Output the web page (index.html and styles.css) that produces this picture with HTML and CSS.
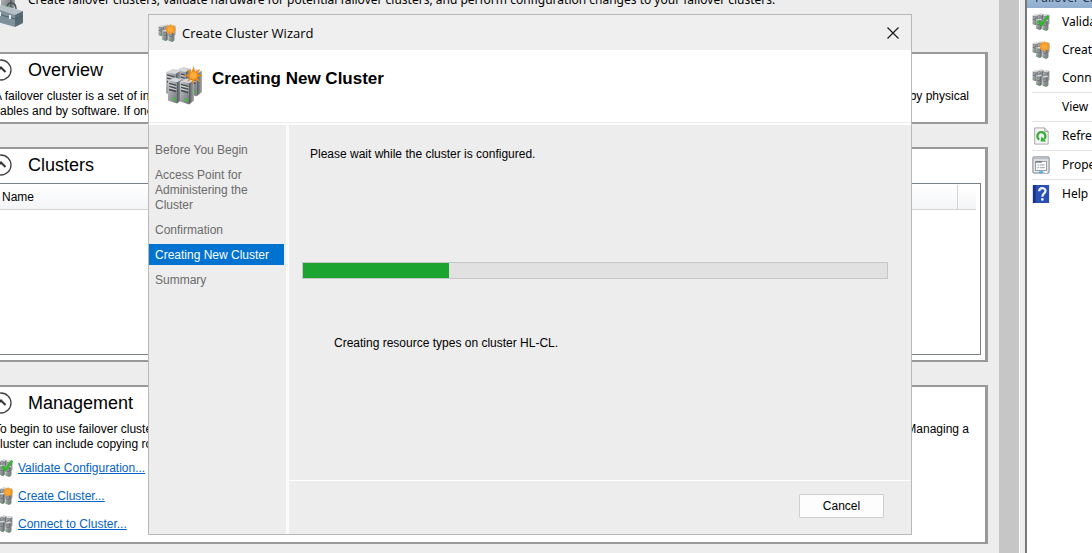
FILE: index.html
```html
<!DOCTYPE html>
<html lang="en">
<head>
    <meta charset="UTF-8">
    <title>Failover Cluster Manager</title>
    <link rel="stylesheet" href="styles.css">
</head>
<body>
<!-- shared icon shapes -->
<svg class="defs" aria-hidden="true">
    <defs>
        <linearGradient id="front" x1="0" y1="0" x2="1" y2="1">
            <stop offset="0" stop-color="#c9cccf"/>
            <stop offset="0.5" stop-color="#999da1"/>
            <stop offset="1" stop-color="#70757a"/>
        </linearGradient>
        <linearGradient id="side" x1="0" y1="0" x2="1" y2="0">
            <stop offset="0" stop-color="#53575b"/>
            <stop offset="1" stop-color="#a6aaad"/>
        </linearGradient>
        <symbol id="server" viewBox="0 0 16 26">
            <path d="M1 3L8 0L15 2L10 5Z" fill="#d5d8da"/>
            <path d="M1 3L10 5V26L1 23Z" fill="url(#front)"/>
            <path d="M10 5L15 2V22L10 26Z" fill="url(#side)"/>
            <path d="M2 6L9 8M2 9L9 11M2 12L9 14" stroke="#43484c" stroke-width="1.4"/>
            <path d="M2 7L9 9M2 10L9 12" stroke="#f7f8f8" stroke-width="0.6"/>
            <circle cx="7.5" cy="21.5" r="1.5" fill="#35c625"/>
        </symbol>
        <symbol id="servers" viewBox="0 0 40 40">
            <use href="#server" x="22" y="3" width="17" height="29"/>
            <use href="#server" x="11" y="1" width="17" height="29"/>
            <use href="#server" x="1" y="3" width="17" height="29"/>
            <use href="#server" x="3" y="12" width="16" height="27"/>
            <use href="#server" x="15" y="13" width="16" height="27"/>
        </symbol>
        <symbol id="servers-sm" viewBox="0 0 20 20">
            <use href="#server" x="0" y="1" width="8" height="13"/>
            <use href="#server" x="6" y="0" width="8" height="13"/>
            <use href="#server" x="12" y="1" width="8" height="13"/>
            <use href="#server" x="4" y="6" width="8" height="13"/>
            <use href="#server" x="11" y="7" width="8" height="13"/>
        </symbol>
        <symbol id="star" viewBox="0 0 20 20">
            <path d="M10 0L11.7 6L17 3L14 8.300L20 10L14 11.700L17 17L11.700 14L10 20L8.300 14L3 17L6 11.700L0 10L6 8.300L3 3L8.300 6Z" fill="#f08a14"/>
            <circle cx="10" cy="10" r="3.500" fill="#ffae3c"/>
        </symbol>
        <symbol id="burst" viewBox="0 0 12 12">
            <path d="M6 0L7.500 2L10 1.500L10.500 4L12 6L10.500 8L10 10.500L7.500 10L6 12L4.500 10L2 10.500L1.500 8L0 6L1.500 4L2 1.500L4.500 2Z" fill="#f59a27"/>
            <circle cx="6" cy="6" r="3" fill="#ffa938"/>
        </symbol>
        <symbol id="check" viewBox="0 0 14 14">
            <path d="M1 7L5 12L13 1" fill="none" stroke="#2fb62b" stroke-width="3"/>
        </symbol>
        <symbol id="collapse" viewBox="0 0 22 22">
            <circle cx="11" cy="11" r="10" fill="#fff" stroke="#404040" stroke-width="1.300"/>
            <path d="M6.500 13L11 8.500L15.500 13" fill="none" stroke="#333" stroke-width="2"/>
        </symbol>
    </defs>
</svg>

<div class="app">
    <main class="workspace">
        <header class="intro">
            <svg class="intro-icon" viewBox="0 0 44 44">
                <use href="#server" x="4" y="0" width="16" height="28"/>
                <use href="#server" x="20" y="0" width="16" height="28"/>
                <path d="M27 24C27 17 36 17 36 25" fill="none" stroke="#4a4f52" stroke-width="1.500"/>
                <path d="M14 24L22 21L43 27L34 32Z" fill="#b4c0c6"/>
                <path d="M14 24L35 31V43L14 37Z" fill="#7f929c"/>
                <path d="M35 31L43 27V39L35 43Z" fill="#566a75"/>
                <path d="M14 29L35 35L43 32" fill="none" stroke="#4d5e68"/>
                <path d="M20 28V32M30 31V35" stroke="#e8edf0" stroke-width="2"/>
            </svg>
            <p>Create failover clusters, validate hardware for potential failover clusters, and perform configuration changes to your failover clusters.</p>
        </header>

        <section class="card">
            <h2><svg class="toggle"><use href="#collapse"/></svg>Overview</h2>
            <p class="line"><span>A failover cluster is a set of independent computers that work together</span><span>connected by physical</span></p>
            <p class="line"><span>cables and by software. If one of the nodes fails, another node begins to</span></p>
        </section>

        <section class="card">
            <h2><svg class="toggle"><use href="#collapse"/></svg>Clusters</h2>
            <div class="list">
                <table>
                    <thead>
                        <tr><th scope="col">Name</th><td class="spare"></td></tr>
                    </thead>
                </table>
            </div>
        </section>

        <section class="card">
            <h2><svg class="toggle"><use href="#collapse"/></svg>Management</h2>
            <p class="line"><span>To begin to use failover clustering, first validate your hardware</span><span>Managing a</span></p>
            <p class="line"><span>cluster can include copying roles from a cluster</span></p>
            <ul class="links">
                <li><svg class="icon" viewBox="0 0 20 20"><use href="#servers-sm"/><use href="#check" x="7" y="1" width="13" height="13"/></svg><a href="#">Validate Configuration...</a></li>
                <li><svg class="icon" viewBox="0 0 20 20"><use href="#servers-sm"/><use href="#burst" x="9" y="0" width="11" height="11"/></svg><a href="#">Create Cluster...</a></li>
                <li><svg class="icon" viewBox="0 0 20 20"><use href="#servers-sm"/></svg><a href="#">Connect to Cluster...</a></li>
            </ul>
        </section>
    </main>

    <div class="scroll"></div>
    <div class="splitter"></div>

    <aside class="actions">
        <h2>Failover Cluster Manager</h2>
        <ul>
            <li><a href="#"><svg class="icon" viewBox="0 0 20 20"><use href="#servers-sm"/><use href="#check" x="6" y="1" width="13" height="15"/></svg>Validate Configuration...</a></li>
            <li><a href="#"><svg class="icon" viewBox="0 0 20 20"><use href="#servers-sm"/><use href="#burst" x="8" y="0" width="12" height="12"/></svg>Create Cluster...</a></li>
            <li><a href="#"><svg class="icon" viewBox="0 0 20 20"><use href="#servers-sm"/></svg>Connect to Cluster...</a></li>
            <li class="group"><a href="#"><span class="icon"></span>View</a></li>
            <li class="group"><a href="#"><svg class="icon" viewBox="0 0 20 20">
                <path d="M3 1H14L18 5V19H3Z" fill="#f6f6f6" stroke="#a2a2a2"/>
                <path d="M14 1V5H18" fill="#ddd" stroke="#a2a2a2"/>
                <path d="M8 14A4.500 4.500 0 1 1 13.500 13.500" fill="none" stroke="#36ad35" stroke-width="2.500"/>
                <path d="M10.500 10.500L16 16H9.500Z" fill="#36ad35"/>
            </svg>Refresh</a></li>
            <li class="group"><a href="#"><svg class="icon" viewBox="0 0 20 20">
                <rect x="1" y="1" width="18" height="18" rx="1" fill="#e3e6e9" stroke="#74797f"/>
                <path d="M2 3H18" stroke="#a9afb5"/>
                <rect x="4" y="6" width="12" height="10" fill="#fff" stroke="#8a9097"/>
                <path d="M4 6.500H11" stroke="#7b8188" stroke-width="2"/>
                <path d="M6 10H8M9 10H14M6 13H8M9 13H14" stroke="#8a9097"/>
                <path d="M8 18H12" stroke="#27b5ea" stroke-width="2"/><path d="M14 18H17" stroke="#fff" stroke-width="2"/>
            </svg>Properties</a></li>
            <li class="group"><a href="#"><svg class="icon" viewBox="0 0 20 20">
                <rect x="1" y="0" width="18" height="20" fill="#2b50b4"/>
                <path d="M1 0H4V20H1Z" fill="#173583"/>
                <path d="M8 7C8 2.500 15 2.500 15 6.500C15 9.500 11.500 9 11.500 13" fill="none" stroke="#eef2ff" stroke-width="2.500"/>
                <circle cx="11.500" cy="16" r="1.500" fill="#eef2ff"/>
            </svg>Help</a></li>
        </ul>
    </aside>
</div>

<div class="wizard" role="dialog" aria-labelledby="wizard-title">
    <div class="titlebar">
        <svg class="title-icon" viewBox="0 0 20 20"><use href="#servers-sm"/><use href="#burst" x="8" y="0" width="12" height="12"/></svg>
        <span id="wizard-title">Create Cluster Wizard</span>
        <button class="close" type="button" aria-label="Close"><svg viewBox="0 0 12 12"><path d="M0.500 0.500L11.500 11.500M11.500 0.500L0.500 11.500" stroke="#1b1b1b" stroke-width="1.200"/></svg></button>
    </div>
    <div class="banner">
        <svg class="banner-icon" viewBox="0 0 40 40"><use href="#servers"/><use href="#star" x="20" y="1" width="19" height="19"/></svg>
        <h1>Creating New Cluster</h1>
    </div>
    <div class="body">
        <ol class="steps">
            <li>Before You Begin</li>
            <li>Access Point for Administering the Cluster</li>
            <li>Confirmation</li>
            <li class="current" aria-current="step">Creating New Cluster</li>
            <li>Summary</li>
        </ol>
        <div class="page">
            <div class="content">
                <label for="progress">Please wait while the cluster is configured.</label>
                <progress id="progress" value="25" max="100"></progress>
                <p class="status">Creating resource types on cluster HL-CL.</p>
            </div>
            <div class="footer">
                <button class="cancel" type="button">Cancel</button>
            </div>
        </div>
    </div>
</div>
</body>
</html>
```

FILE: styles.css
```css
* {
    box-sizing: border-box;
}
body {
    margin: 0;
    height: 100vh;
    overflow: hidden;
    position: relative;
    background: #ededed;
    color: #000;
    font: 12px/15px "Liberation Sans", Arial, sans-serif;
}
h1, h2, p, ul, ol {
    margin: 0;
    padding: 0;
    font-weight: normal;
    list-style: none;
}
.defs {
    position: absolute;
    width: 0;
    height: 0;
}
.app {
    display: flex;
    height: 100%;
}

/* left pane, scrolled a little past its top left corner */
.workspace {
    flex: 1;
    min-width: 0;
    margin-left: -20px;
    padding-right: 11px;
    white-space: nowrap;
}
.intro {
    display: flex;
    gap: 6px;
    height: 68px;
    margin-top: -16px;
}
.intro p {
    padding-top: 8px;
    font-family: "Noto Sans", "Open Sans", sans-serif;
}
.intro-icon {
    width: 44px;
    height: 44px;
    flex: none;
    margin-right: -2px;
}
.card {
    margin-bottom: 23px;
    padding: 0 4px 3px 10px;
    border: 2px solid #999;
    border-right-width: 3px;
    background: #fff;
}
.card h2 {
    display: flex;
    align-items: center;
    gap: 16px;
    height: 32px;
    margin-bottom: 3px;
    font-size: 18px;
}
.toggle {
    width: 22px;
    height: 22px;
    margin-left: -2px;
}
.line {
    display: flex;
    justify-content: space-between;
    padding: 0 12px 0 2px;
}
.list {
    height: 172px;
    margin: -1px 0 2px;
    border: 1px solid #7b818a;
    padding: 1px 4px 0 0;
}
.list table {
    width: 100%;
    border-collapse: collapse;
}
.list th, .list td {
    height: 24px;
    padding: 2px 0 0 9px;
    border-bottom: 1px solid #d5d5d5;
    background: linear-gradient(#fff, #f4f5f7);
    font-weight: normal;
    text-align: left;
}
.list .spare {
    width: 19px;
    border-left: 1px solid #d5d5d5;
}
.links {
    padding: 2px 0 1px;
}
.links li {
    display: flex;
    align-items: center;
    gap: 4px;
    height: 28px;
    padding-left: 2px;
}
.links a {
    color: #0563c7;
}
.icon {
    flex: none;
    width: 18px;
    height: 18px;
}
.links .icon {
    width: 20px;
}

.scroll {
    width: 20px;
    background: #c6c6c6;
}
.splitter {
    width: 8px;
    border-left: 1px solid #fafafa;
    border-right: 2px solid #777;
    background: #ededed;
}

/* actions pane, runs off the right edge */
.actions {
    width: 65px;
    overflow: hidden;
    background: #fff;
    font: 12px/18px "Noto Sans", "Open Sans", sans-serif;
    white-space: nowrap;
}
.actions h2 {
    height: 20px;
    margin-top: -12px;
    padding: 0 8px;
    background: linear-gradient(#b0c6de, #8fadcf);
    font-size: 12px;
    line-height: 20px;
    color: #24364c;
}
.actions ul {
    padding-left: 5px;
}
.actions li a {
    display: flex;
    align-items: center;
    gap: 12px;
    height: 28px;
    color: #000;
    text-decoration: none;
}
.actions .group {
    border-top: 1px solid #e3e3e3;
}

/* wizard window */
.wizard {
    position: absolute;
    top: 14px;
    left: 148px;
    right: 180px;
    border: 1px solid #b9b9b9;
    background: #ededed;
}
.titlebar {
    display: flex;
    align-items: center;
    gap: 6px;
    height: 35px;
    padding: 0 12px 0 9px;
    background: #efefef;
    font: 13px/18px "Open Sans", "Noto Sans", sans-serif;
}
.title-icon {
    width: 18px;
    height: 18px;
}
.close {
    display: flex;
    margin-left: auto;
    padding: 0;
    border: 0;
    background: none;
}
.close svg {
    width: 12px;
    height: 12px;
}
.banner {
    display: flex;
    gap: 8px;
    height: 75px;
    padding: 15px 15px 0;
    border-bottom: 2px solid #fff;
    background: #fff;
    box-shadow: inset 0 -1px #ececec;
}
.banner-icon {
    width: 40px;
    height: 40px;
}
.banner h1 {
    padding-top: 5px;
    font-size: 17px;
    line-height: 18px;
    font-weight: bold;
}
.body {
    display: flex;
}
.steps {
    display: flex;
    flex-direction: column;
    gap: 4px;
    width: 140px;
    padding: 14px 2px 0 0;
    border-right: 3px solid #fbfbfb;
    color: #6b6b6b;
}
.steps li {
    padding: 4px 25px 2px 6px;
}
.steps .current {
    padding-right: 0;
    background: #0072d0;
    color: #fff;
}
.page {
    flex: 1;
}
.content {
    height: 355px;
    padding: 22px 23px 0 13px;
}
.content label {
    display: block;
    padding-left: 8px;
}
progress {
    display: block;
    width: 100%;
    height: 17px;
    margin: 100px 0 57px;
    border: 1px solid #c6c6c6;
    background: #e1e1e1;
    appearance: none;
}
progress::-webkit-progress-bar {
    background: #e1e1e1;
}
progress::-webkit-progress-value {
    background: #1ca430;
}
.status {
    padding-left: 32px;
}
.footer {
    display: flex;
    justify-content: flex-end;
    padding: 13px 27px 16px;
    border-top: 1px solid #fff;
}
.cancel {
    width: 85px;
    height: 24px;
    border: 1px solid #cfcfcf;
    border-radius: 1px;
    background: #fdfdfd;
    color: #000;
    font: inherit;
}
```
